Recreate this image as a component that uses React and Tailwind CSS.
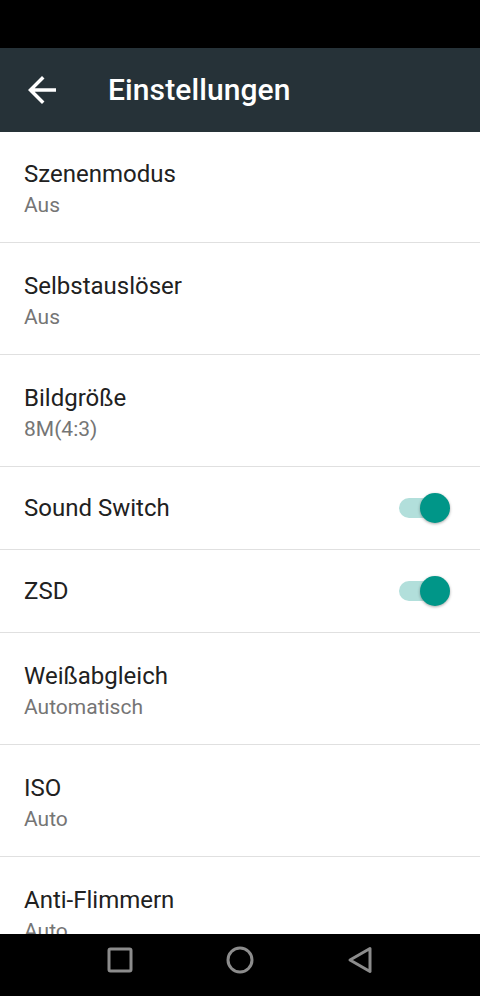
import React from 'react';

const rows = [
  { title: 'Szenenmodus', summary: 'Aus', first: true },
  { title: 'Selbstauslöser', summary: 'Aus' },
  { title: 'Bildgröße', summary: '8M(4:3)' },
  { title: 'Sound Switch', toggle: true },
  { title: 'ZSD', toggle: true },
  { title: 'Weißabgleich', summary: 'Automatisch' },
  { title: 'ISO', summary: 'Auto' },
  { title: 'Anti-Flimmern', summary: 'Auto' },
];

const Toggle = () => (
  <div className="relative w-[51px] h-[30px]">
    <div className="absolute left-0 top-[5px] h-[20px] w-[46px] rounded-full bg-[#b2dfdb]" />
    <div className="absolute right-0 top-0 w-[30px] h-[30px] rounded-full bg-[#009688] shadow-[0_1px_3px_rgba(0,0,0,0.35)]" />
  </div>
);

const Row = ({ item }) => {
  if (item.toggle) {
    return (
      <div className="h-[83px] shrink-0 border-b border-[#e0e0e0] flex items-center justify-between pl-6 pr-[30px]">
        <span className="text-[24px] leading-8 text-[#212121]">{item.title}</span>
        <Toggle />
      </div>
    );
  }
  return (
    <div className={`${item.first ? 'h-[111px] pt-[26px]' : 'h-[112px] pt-[27px]'} shrink-0 border-b border-[#e0e0e0] pl-6`}>
      <div className="text-[24px] leading-8 text-[#212121]">{item.title}</div>
      <div className="text-[21px] leading-[30px] text-[#757575]">{item.summary}</div>
    </div>
  );
};

const App = () => {
  return (
    <div className="w-[480px] h-[996px] flex flex-col bg-white overflow-hidden font-['Roboto',sans-serif]">
      {/* Status bar */}
      <div className="h-12 shrink-0 bg-black" />

      {/* Toolbar */}
      <div className="h-[84px] shrink-0 bg-[#263238] flex items-center">
        <svg className="ml-[21px]" width="42" height="42" viewBox="0 0 24 24" fill="#ffffff">
          <path d="M20 11H7.83l5.59-5.59L12 4l-8 8 8 8 1.41-1.41L7.83 13H20v-2z" />
        </svg>
        <span className="ml-[45px] text-[30px] font-medium text-white leading-none tracking-[0.1px]">Einstellungen</span>
      </div>

      {/* Preferences */}
      <div className="flex-1 min-h-0 overflow-hidden flex flex-col">
        {rows.map((item) => (
          <Row key={item.title} item={item} />
        ))}
      </div>

      {/* Navigation bar */}
      <div className="h-[62px] shrink-0 bg-black flex items-center justify-center pb-[10px]">
        <div className="w-[120px] flex justify-center">
          <svg width="28" height="28" viewBox="0 0 28 28">
            <rect x="3" y="3" width="22" height="22" rx="1.5" fill="none" stroke="#8c8c8c" strokeWidth="3" />
          </svg>
        </div>
        <div className="w-[120px] flex justify-center">
          <svg width="30" height="30" viewBox="0 0 30 30">
            <circle cx="15" cy="15" r="12" fill="none" stroke="#8c8c8c" strokeWidth="3" />
          </svg>
        </div>
        <div className="w-[120px] flex justify-center">
          <svg width="28" height="30" viewBox="0 0 28 30">
            <path d="M24 3.5 L4 15 L24 26.5 Z" fill="none" stroke="#8c8c8c" strokeWidth="3" strokeLinejoin="round" />
          </svg>
        </div>
      </div>
    </div>
  );
};

export default App;
